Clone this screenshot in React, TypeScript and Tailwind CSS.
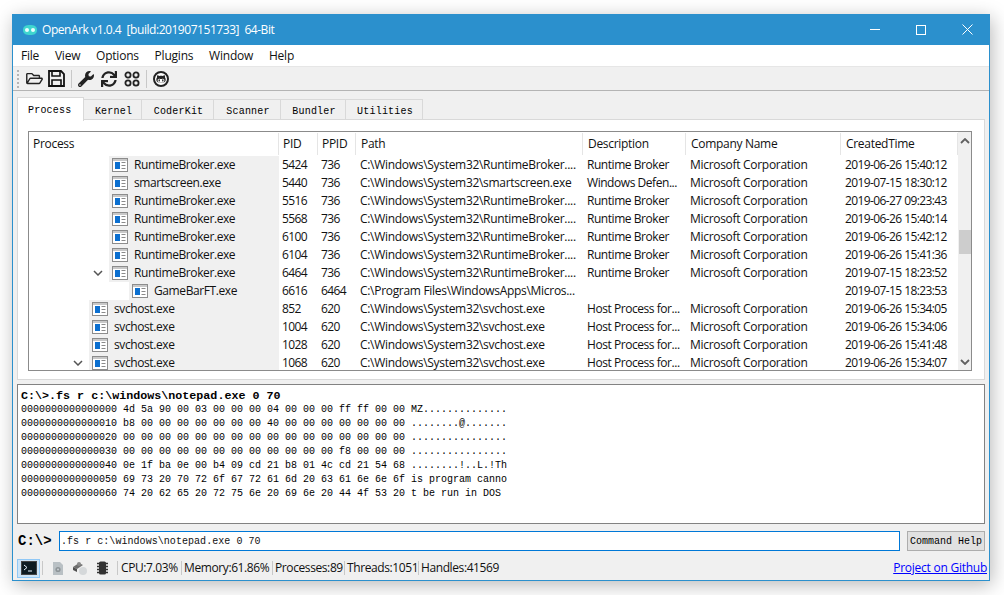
import React from "react";
import { FaRegFolderOpen, FaWrench, FaSync, FaGithubAlt } from "react-icons/fa";

const UI = "font-['Open_Sans','Noto_Sans',sans-serif]";
const COLS = "grid grid-cols-[250px_39px_38px_227px_103px_155px_117px]";

type Row = { n: string; d: 0 | 1 | 2; c?: boolean; pid: string; ppid: string; path: string; desc: string; co: string; t: string };
const RB = "C:\\Windows\\System32\\RuntimeBroker....";
const SV = "C:\\Windows\\System32\\svchost.exe";
const MS = "Microsoft Corporation";
const rows: Row[] = [
  { n: "RuntimeBroker.exe", d: 1, pid: "5424", ppid: "736", path: RB, desc: "Runtime Broker", co: MS, t: "2019-06-26 15:40:12" },
  { n: "smartscreen.exe", d: 1, pid: "5440", ppid: "736", path: "C:\\Windows\\System32\\smartscreen.exe", desc: "Windows Defen...", co: MS, t: "2019-07-15 18:30:12" },
  { n: "RuntimeBroker.exe", d: 1, pid: "5516", ppid: "736", path: RB, desc: "Runtime Broker", co: MS, t: "2019-06-27 09:23:43" },
  { n: "RuntimeBroker.exe", d: 1, pid: "5568", ppid: "736", path: RB, desc: "Runtime Broker", co: MS, t: "2019-06-26 15:40:14" },
  { n: "RuntimeBroker.exe", d: 1, pid: "6100", ppid: "736", path: RB, desc: "Runtime Broker", co: MS, t: "2019-06-26 15:42:12" },
  { n: "RuntimeBroker.exe", d: 1, pid: "6104", ppid: "736", path: RB, desc: "Runtime Broker", co: MS, t: "2019-06-26 15:41:36" },
  { n: "RuntimeBroker.exe", d: 1, c: true, pid: "6464", ppid: "736", path: RB, desc: "Runtime Broker", co: MS, t: "2019-07-15 18:23:52" },
  { n: "GameBarFT.exe", d: 2, pid: "6616", ppid: "6464", path: "C:\\Program Files\\WindowsApps\\Micros...", desc: "", co: "", t: "2019-07-15 18:23:53" },
  { n: "svchost.exe", d: 0, pid: "852", ppid: "620", path: SV, desc: "Host Process for...", co: MS, t: "2019-06-26 15:34:05" },
  { n: "svchost.exe", d: 0, pid: "1004", ppid: "620", path: SV, desc: "Host Process for...", co: MS, t: "2019-06-26 15:34:06" },
  { n: "svchost.exe", d: 0, pid: "1028", ppid: "620", path: SV, desc: "Host Process for...", co: MS, t: "2019-06-26 15:41:48" },
  { n: "svchost.exe", d: 0, c: true, pid: "1068", ppid: "620", path: SV, desc: "Host Process for...", co: MS, t: "2019-06-26 15:34:07" },
];

const dump = [
  "0000000000000000 4d 5a 90 00 03 00 00 00 04 00 00 00 ff ff 00 00 MZ..............",
  "0000000000000010 b8 00 00 00 00 00 00 00 40 00 00 00 00 00 00 00 ........@.......",
  "0000000000000020 00 00 00 00 00 00 00 00 00 00 00 00 00 00 00 00 ................",
  "0000000000000030 00 00 00 00 00 00 00 00 00 00 00 00 f8 00 00 00 ................",
  "0000000000000040 0e 1f ba 0e 00 b4 09 cd 21 b8 01 4c cd 21 54 68 ........!..L.!Th",
  "0000000000000050 69 73 20 70 72 6f 67 72 61 6d 20 63 61 6e 6e 6f is program canno",
  "0000000000000060 74 20 62 65 20 72 75 6e 20 69 6e 20 44 4f 53 20 t be run in DOS ",
];

function ProcIcon() {
  return (
    <svg width="16" height="14" viewBox="0 0 16 14" className="shrink-0">
      <rect x="0.5" y="0.5" width="15" height="13" fill="#fff" stroke="#8c8c8c" />
      <rect x="1" y="1" width="14" height="2" fill="#c8c8c8" />
      <rect x="3" y="4" width="5" height="7" fill="#0b6fd0" />
      <path d="M9.5 4.5h4M9.5 7.5h4M9.5 10.5h4" stroke="#8a8a8a" />
    </svg>
  );
}

function Chevron() {
  return (
    <svg width="10" height="6" viewBox="0 0 10 6">
      <path d="M1 1l4 4 4-4" fill="none" stroke="#555" strokeWidth="1.5" />
    </svg>
  );
}

function Tab({ label, active, w }: { label: string; active?: boolean; w: string }) {
  return (
    <div
      className={
        active
          ? `${w} h-[24px] -mb-px z-10 bg-white border border-b-0 border-[#d9d9d9] pl-[10px] pt-[6px] font-['Liberation_Mono',monospace] tracking-[0.2px] text-[10px] leading-[14px] text-black`
          : `${w} h-[21px] mt-[2px] bg-[#f0f0f0] border border-l-0 border-[#d9d9d9] flex items-center justify-center pt-[3px] pl-[2px] font-['Liberation_Mono',monospace] tracking-[0.2px] text-[10px] text-black`
      }
    >
      {label}
    </div>
  );
}

function Sep() {
  return <div className="w-px h-[18px] bg-[#c8c8c8]" />;
}

function Logo() {
  return (
    <svg width="16" height="12" viewBox="0 0 16 12">
      <path d="M1 6C1 2 4 1 8 1s7 1 7 5-3 5-7 5-7-1-7-5z" fill="#3fd6cf" />
      <circle cx="5" cy="6" r="2" fill="#e8fffd" />
      <circle cx="11" cy="6" r="2" fill="#e8fffd" />
    </svg>
  );
}

function GitRing() {
  return (
    <div className="w-[16px] h-[16px] rounded-full border-2 border-[#222] bg-white flex items-center justify-center">
      <FaGithubAlt className="w-[10px] h-[10px] text-[#222]" />
    </div>
  );
}

function SaveIcon() {
  return (
    <svg width="17" height="17" viewBox="0 0 17 17">
      <path d="M1 1h12l3 3v12H1z" fill="none" stroke="#111" strokeWidth="1.8" />
      <path d="M4 1v5h8V1" fill="none" stroke="#111" strokeWidth="1.6" />
      <path d="M4 16v-6h9v6" fill="none" stroke="#111" strokeWidth="1.6" />
    </svg>
  );
}

function ProcessRow({ r }: { r: Row }) {
  const indent = r.d === 0 ? "pl-[60px]" : r.d === 1 ? "pl-[80px]" : "pl-[100px]";
  const chevron = r.d === 0 ? "w-[60px] pl-[44px]" : "w-[80px] pl-[64px]";
  return (
    <div className={`${COLS} h-[18px] text-[12px] leading-[18px] text-[#111]`}>
      <div className={`relative ${indent}`}>
        {r.c && (
          <div className={`absolute left-0 top-0 h-[18px] flex items-center ${chevron}`}>
            <Chevron />
          </div>
        )}
        <div className="bg-[#f0f0f0] h-[18px] flex items-center pl-[3px] gap-[6px]">
          <ProcIcon />
          <span className="tracking-[-0.4px]">{r.n}</span>
        </div>
      </div>
      <div className="pl-[3px] tracking-[-0.6px]">{r.pid}</div>
      <div className="pl-[3px] tracking-[-0.6px]">{r.ppid}</div>
      <div className="pl-[4px] tracking-[-0.3px] whitespace-nowrap overflow-hidden">{r.path}</div>
      <div className="pl-[4px] tracking-[-0.45px] whitespace-nowrap overflow-hidden">{r.desc}</div>
      <div className="pl-[4px] tracking-[-0.3px] whitespace-nowrap overflow-hidden">{r.co}</div>
      <div className="pl-[4px] tracking-[-0.6px] whitespace-nowrap overflow-hidden">{r.t}</div>
    </div>
  );
}

function Head({ label, pl }: { label: string; pl: string }) {
  return (
    <div className="h-[22px] flex items-center pt-px">
      <div className={`flex-1 ${pl} text-[12px] tracking-[-0.3px] text-[#111]`}>{label}</div>
      <div className="w-px h-[22px] bg-[#e5e5e5]" />
    </div>
  );
}

export default function App() {
  return (
    <div className="w-[1004px] h-[595px] bg-white overflow-hidden pt-[14px] pl-[12px]">
      <div className={`w-[978px] h-[567px] flex flex-col bg-[#f0f0f0] border border-t-0 border-[#2b90cd] shadow-[2px_4px_18px_rgba(0,0,0,0.28)] tracking-[-0.22px] ${UI}`}>
        {/* Title bar */}
        <div className="h-[31px] shrink-0 -mx-px bg-[#2b90cd] flex items-center text-white">
          <div className="ml-[10px] w-[20px]">
            <Logo />
          </div>
          <div className="text-[12px] whitespace-pre tracking-[-0.45px]">OpenArk v1.0.4  [build:201907151733]  64-Bit</div>
          <div className="ml-auto flex items-center">
            <div className="w-[46px] flex justify-center">
              <div className="w-[10px] h-px bg-white" />
            </div>
            <div className="w-[46px] flex justify-center">
              <div className="w-[10px] h-[10px] border border-white" />
            </div>
            <div className="w-[46px] flex justify-center">
              <svg width="11" height="11" viewBox="0 0 11 11">
                <path d="M0.5 0.5l10 10M10.5 0.5l-10 10" stroke="#fff" strokeWidth="1" />
              </svg>
            </div>
          </div>
        </div>
        {/* Menu */}
        <div className="h-[21px] shrink-0 bg-white flex items-center pl-[8px] gap-[15.8px] text-[12px] text-[#111]">
          {["File", "View", "Options", "Plugins", "Window", "Help"].map((m) => (
            <span key={m}>{m}</span>
          ))}
        </div>
        {/* Toolbar */}
        <div className="h-[25px] shrink-0 bg-[#f0f0f0] border-t border-[#e6e6e6] border-b border-b-[#b4b4b4] flex items-center pl-[4px]">
          <div className="w-[3px] h-[18px] border-l-2 border-dotted border-[#b5b5b5]" />
          <div className="ml-[6px] w-[16px] flex justify-center">
            <FaRegFolderOpen className="w-[17px] h-[15px] shrink-0 text-[#222]" />
          </div>
          <div className="ml-[6px] w-[17px] flex justify-center">
            <SaveIcon />
          </div>
          <div className="ml-[6px]">
            <Sep />
          </div>
          <div className="ml-[6px] w-[16px] flex justify-center">
            <FaWrench className="w-[16px] h-[16px] text-[#222]" />
          </div>
          <div className="ml-[7px] w-[16px] flex justify-center">
            <FaSync className="w-[16px] h-[16px] text-[#222]" />
          </div>
          <div className="ml-[7px] w-[16px]">
            <svg width="16" height="16" viewBox="0 0 16 16">
              <g fill="none" stroke="#222" strokeWidth="1.8">
                <circle cx="4" cy="4" r="2.6" />
                <circle cx="12" cy="4" r="2.6" />
                <circle cx="4" cy="12" r="2.6" />
                <circle cx="12" cy="12" r="2.6" />
              </g>
            </svg>
          </div>
          <div className="ml-[6px]">
            <Sep />
          </div>
          <div className="ml-[6px]">
            <GitRing />
          </div>
        </div>
        {/* Tabs */}
        <div className="mx-[4px] mt-[5px] flex h-[24px] shrink-0 items-end relative z-10">
          <Tab label="Process" active w="w-[67px]" />
          <Tab label="Kernel" w="w-[58px]" />
          <Tab label="CoderKit" w="w-[72px]" />
          <Tab label="Scanner" w="w-[67px]" />
          <Tab label="Bundler" w="w-[65px]" />
          <Tab label="Utilities" w="w-[77px]" />
        </div>
        {/* Pane */}
        <div className="mx-[4px] -mt-px h-[261px] shrink-0 bg-white border border-[#d9d9d9] pt-[11px] pl-[10px] pr-[12px]">
          <div className="h-[240px] border border-[#8b8b8b] flex bg-white">
            <div className="w-[929px] overflow-hidden">
              <div className={`${COLS}`}>
                <Head label="Process" pl="pl-[4px]" />
                <Head label="PID" pl="pl-[4px]" />
                <Head label="PPID" pl="pl-[4px]" />
                <Head label="Path" pl="pl-[5px]" />
                <Head label="Description" pl="pl-[5px]" />
                <Head label="Company Name" pl="pl-[5px]" />
                <Head label="CreatedTime" pl="pl-[5px]" />
              </div>
              <div className="h-[216px] pt-[2px] overflow-hidden">
                {rows.map((r) => (
                  <ProcessRow key={r.pid} r={r} />
                ))}
              </div>
            </div>
            <div className="flex-1 bg-[#f0f0f0] flex flex-col items-stretch">
              <div className="h-[17px] flex items-center justify-center">
                <svg width="10" height="6" viewBox="0 0 10 6">
                  <path d="M1 5l4-4 4 4" fill="none" stroke="#606060" strokeWidth="1.8" />
                </svg>
              </div>
              <div className="mt-[81px] h-[24px] ml-px bg-[#cdcdcd]" />
              <div className="mt-auto h-[17px] flex items-center justify-center">
                <svg width="10" height="6" viewBox="0 0 10 6">
                  <path d="M1 1l4 4 4-4" fill="none" stroke="#606060" strokeWidth="1.8" />
                </svg>
              </div>
            </div>
          </div>
        </div>
        {/* Console */}
        <div className="mx-[4px] mt-[4px] h-[140px] shrink-0 bg-white border border-[#828282] pl-[3px] pt-[4px] font-['Liberation_Mono',monospace] tracking-normal text-black">
          <div className="text-[11.7px] font-bold leading-[14px] whitespace-pre">C:\&gt;.fs r c:\windows\notepad.exe 0 70</div>
          {dump.map((l) => (
            <div key={l} className="text-[10px] leading-[14px] whitespace-pre">
              {l}
            </div>
          ))}
        </div>
        {/* Command row */}
        <div className="mx-[4px] mt-[7px] h-[20px] shrink-0 flex items-center">
          <div className="w-[42px] pl-px font-['Liberation_Mono',monospace] font-bold text-[14px] tracking-[0px] text-black whitespace-pre">C:\&gt;</div>
          <div className="w-[843px] h-[20px] border border-[#0078d7] bg-white flex items-center pl-[1px] font-['Liberation_Mono',monospace] tracking-[0.05px] text-[10px] text-[#111] whitespace-pre">
            .fs r c:\windows\notepad.exe 0 70
          </div>
          <div className="ml-[7px] w-[78px] h-[20px] bg-[#e1e1e1] border border-[#adadad] flex items-center justify-center font-['Liberation_Mono',monospace] tracking-normal text-[10px] text-black">
            Command Help
          </div>
        </div>
        {/* Status */}
        <div className="h-[24px] mt-[5px] shrink-0 flex items-center pl-[4px] pr-[2px] text-[12px] tracking-[-0.4px] text-[#111]">
          <div className="w-[23px] h-[19px] bg-[#cce4f7] border border-[#90c8f6] flex items-center justify-center">
            <svg width="16" height="14" viewBox="0 0 16 14">
              <rect x="0.5" y="0.5" width="15" height="13" fill="#0d1b22" stroke="#444" />
              <path d="M3 4l3 2.5L3 9" fill="none" stroke="#e8f4ff" strokeWidth="1" />
              <path d="M7 10h4" stroke="#e8f4ff" />
            </svg>
          </div>
          <div className="ml-[2px] w-px h-[14px] bg-[#c8c8c8]" />
          <div className="ml-[9px] w-[14px]">
            <svg width="12" height="15" viewBox="0 0 12 15">
              <path d="M1 1h7l3 3v10H1z" fill="#b9c0c4" />
              <circle cx="6" cy="8.5" r="2.6" fill="#8d9498" />
              <circle cx="6" cy="8.5" r="1" fill="#c8ced1" />
            </svg>
          </div>
          <div className="ml-[6px] w-[16px]">
            <svg width="16" height="15" viewBox="0 0 16 15">
              <path d="M1 6l6-4 4 2-6 4z" fill="#6f6f6f" />
              <path d="M1 6v3l4 2V8z" fill="#4f4f4f" />
              <circle cx="7" cy="3" r="2" fill="#8a8a8a" />
              <circle cx="11" cy="10" r="4" fill="#d5d8da" />
            </svg>
          </div>
          <div className="ml-[9px] w-[11px]">
            <svg width="11" height="14" viewBox="0 0 11 14">
              <rect x="2" y="0.5" width="7" height="13" rx="1.5" fill="#333" />
              <path d="M0 2.5h11M0 5.5h11M0 8.5h11M0 11.5h11" stroke="#333" strokeWidth="1.4" />
            </svg>
          </div>
          <div className="ml-[9px] w-px h-[14px] bg-[#c8c8c8]" />
          <div className="ml-[3px] w-[60px] whitespace-nowrap">CPU:7.03%</div>
          <div className="w-px h-[14px] bg-[#c8c8c8]" />
          <div className="ml-[2px] w-[88px] whitespace-nowrap">Memory:61.86%</div>
          <div className="w-px h-[14px] bg-[#c8c8c8]" />
          <div className="ml-[2px] w-[69px] whitespace-nowrap">Processes:89</div>
          <div className="w-px h-[14px] bg-[#c8c8c8]" />
          <div className="ml-[2px] w-[71px] whitespace-nowrap">Threads:1051</div>
          <div className="w-px h-[14px] bg-[#c8c8c8]" />
          <div className="ml-[2px] whitespace-nowrap">Handles:41569</div>
          <a className="ml-auto text-[#0000ff] underline whitespace-nowrap tracking-[-0.25px]" href="#">
            Project on Github
          </a>
        </div>
      </div>
    </div>
  );
}
